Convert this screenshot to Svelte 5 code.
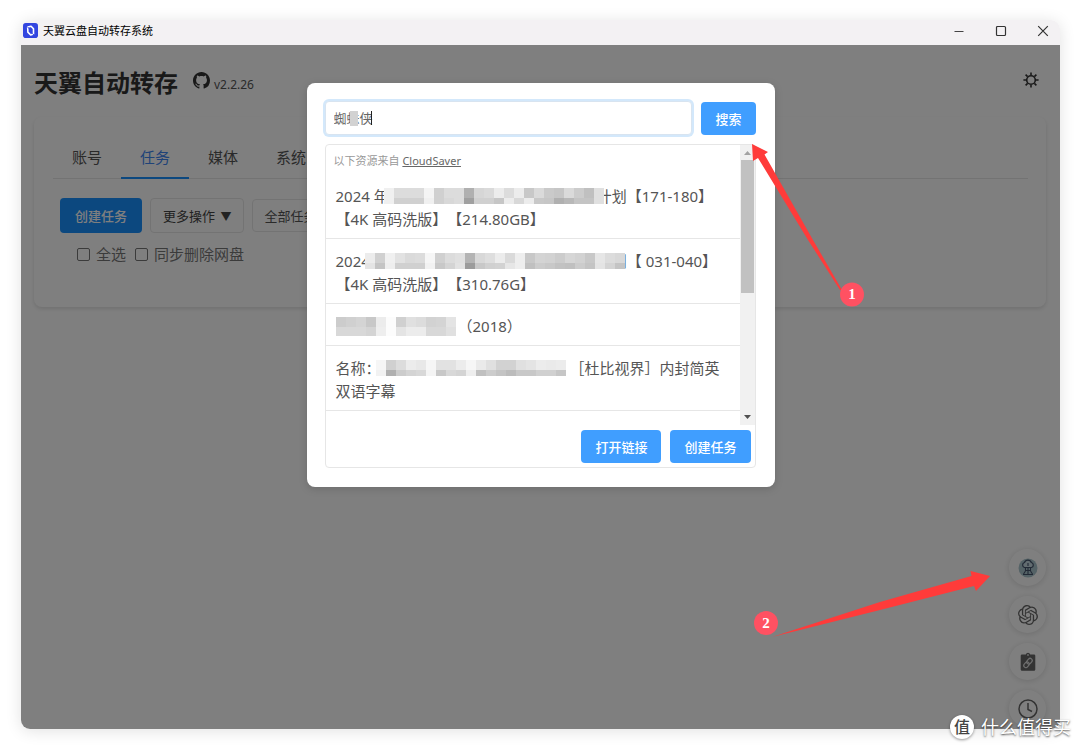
<script lang="ts">
    let keyword = '蜘蛛侠';
    let activeTab = '任务';
    let checkAll = false;
    let syncDelete = false;
    const tabs = ['账号', '任务', '媒体', '系统'];

    // hidden parts of resource titles, two rows of grey levels per title
    const masks: Record<string, string[]> = {
        a: [
            'f0 dc dc dc f4 d0 dc dc b0 d6 da ec dc ec c8 da ca c6 da cc c0 e0',
            'f0 d0 d0 d0 f0 d0 d8 dc a0 d0 d0 c6 ec d8 ec c8 c6 b0 b8 c4 c4 e0',
        ],
        b: [
            'ec d0 f0 e2 da dc f6 d0 dc e0 b4 d8 de ec da ee c8 d4 d2 cc d6 d2 c8 e6 dc d8',
            'e4 c4 ee d0 d0 d0 f2 c8 d4 e2 9c c8 d0 d2 e6 ee c0 cc c8 c2 c0 cc c4 e4 d4 c4',
        ],
        c: [
            'cc d0 d4 c8 ec fc d0 e0 dc d2 d4 e4',
            'd8 d8 d8 d4 ee fc e4 ec ec d8 d8 e0',
        ],
        d: [
            'f6 d0 dc ec e8 f6 e2 e2 ec f6 ea e0 d2 d2 e0 e4 ec ea ec',
            'f2 b0 cc d4 d8 f4 c8 d8 d4 ee c0 cc c4 bc c8 c8 d0 d0 c6',
        ],
    };
    const items = [
        { before: '2024 年', mask: 'a', after: '计划【171-180】', second: '【4K 高码洗版】【214.80GB】' },
        { before: '2024', mask: 'b', after: '划【 031-040】', second: '【4K 高码洗版】【310.76G】' },
        { before: '', mask: 'c', after: '（2018）', second: '' },
        { before: '名称：', mask: 'd', after: '［杜比视界］内封简英', second: '双语字幕' },
    ];

    function cells(key: string) {
        return masks[key].map((row) => row.split(' '));
    }
</script>

<div class="desktop">
    <div class="window">
        <header class="titlebar">
            <svg class="app-icon" width="15" height="15" viewBox="0 0 16 16" aria-hidden="true">
                <rect width="16" height="16" rx="3" fill="#3346e0"/>
                <path d="M5 4.2L8.6 3.4L11.2 6.2V11.8L8.2 12.8L5.2 9.8Z" fill="none" stroke="#fff" stroke-width="1.7" stroke-linejoin="round"/>
                <path d="M4.600 3.800L6.400 6M10 11L11.600 12.800" stroke="#3346e0" stroke-width="1"/>
            </svg>
            <span class="app-name">天翼云盘自动转存系统</span>
            <div class="controls">
                <button aria-label="最小化">
                    <svg width="12" height="12" viewBox="0 0 12 12"><path d="M1.5 6.5H10.5" stroke="#444" stroke-width="1.2"/></svg>
                </button>
                <button aria-label="最大化">
                    <svg width="12" height="12" viewBox="0 0 12 12"><rect x="1.5" y="1.5" width="9" height="9" rx="1" fill="none" stroke="#333" stroke-width="1.2"/></svg>
                </button>
                <button aria-label="关闭">
                    <svg width="12" height="12" viewBox="0 0 12 12"><path d="M1.2 1.2L10.8 10.8M10.8 1.2L1.2 10.8" stroke="#333" stroke-width="1.2"/></svg>
                </button>
            </div>
        </header>

        <div class="page">
            <div class="page-head">
                <h1>天翼自动转存</h1>
                <a class="github" href="#github" aria-label="GitHub">
                    <svg width="17" height="17" viewBox="0 0 16 16" fill="#333"><path d="M8 0C3.58 0 0 3.58 0 8c0 3.54 2.29 6.53 5.47 7.59.4.07.55-.17.55-.38 0-.19-.01-.82-.01-1.49-2.01.37-2.53-.49-2.69-.94-.09-.23-.48-.94-.82-1.13-.28-.15-.68-.52-.01-.53.63-.01 1.08.58 1.23.82.72 1.21 1.87.87 2.33.66.07-.52.28-.87.51-1.07-1.78-.2-3.64-.89-3.64-3.95 0-.87.31-1.59.82-2.15-.08-.2-.36-1.02.08-2.12 0 0 .67-.21 2.2.82.64-.18 1.32-.27 2-.27s1.36.09 2 .27c1.53-1.04 2.2-.82 2.2-.82.44 1.1.16 1.92.08 2.12.51.56.82 1.27.82 2.15 0 3.07-1.87 3.75-3.65 3.95.29.25.54.73.54 1.48 0 1.07-.01 1.93-.01 2.2 0 .21.15.46.55.38A8.01 8.01 0 0 0 16 8c0-4.42-3.58-8-8-8z"/></svg>
                </a>
                <span class="version">v2.2.26</span>
                <button class="theme" aria-label="切换主题">
                    <svg width="16" height="16" viewBox="0 0 16 16" fill="none" stroke="#333" stroke-width="1.6">
                        <circle cx="8" cy="8" r="4.3"/>
                        <path d="M8 0.4V3M8 13V15.6M0.4 8H3M13 8H15.6M2.6 2.6L4.6 4.6M11.4 11.4L13.4 13.4M2.6 13.4L4.6 11.4M11.4 4.6L13.4 2.6"/>
                    </svg>
                </button>
            </div>

            <section class="card">
                <nav class="tabs">
                    {#each tabs as tab}
                        <button class:active={tab === activeTab} on:click={() => activeTab = tab}>{tab}</button>
                    {/each}
                </nav>
                <div class="toolbar">
                    <button class="create">创建任务</button>
                    <button class="more">更多操作 <span>▼</span></button>
                    <select aria-label="任务筛选">
                        <option>全部任务</option>
                    </select>
                </div>
                <div class="checks">
                    <label><input type="checkbox" bind:checked={checkAll}>全选</label>
                    <label><input type="checkbox" bind:checked={syncDelete}>同步删除网盘</label>
                </div>
            </section>

            <div class="floats">
                <button aria-label="CloudSaver">
                    <svg width="20" height="20" viewBox="0 0 20 20">
                        <circle cx="10" cy="10" r="9.5" fill="#a9c4cc"/>
                        <path d="M6.5 9.5a2.6 2.6 0 0 1 0-5a3.6 3.6 0 0 1 6.8 0a2.6 2.6 0 0 1 .2 5Z" fill="#c4d8e0" stroke="#44546c" stroke-width="1.2"/>
                        <path d="M10 5V8M7.5 10V12.5H12.5V10M10 10V16M5.5 16L7.5 13M14.5 16L12.5 13M5 16.5H15" fill="none" stroke="#44546c" stroke-width="1.1"/>
                    </svg>
                </button>
                <button aria-label="AI">
                    <svg width="20" height="20" viewBox="0 0 24 24" fill="#666"><path d="M22.2819 9.8211a5.9847 5.9847 0 0 0-.5157-4.9108 6.0462 6.0462 0 0 0-6.5098-2.9A6.0651 6.0651 0 0 0 4.9807 4.1818a5.9847 5.9847 0 0 0-3.9977 2.9 6.0462 6.0462 0 0 0 .7427 7.0966 5.98 5.98 0 0 0 .511 4.9107 6.051 6.051 0 0 0 6.5146 2.9001A5.9847 5.9847 0 0 0 13.2599 24a6.0557 6.0557 0 0 0 5.7718-4.2058 5.9894 5.9894 0 0 0 3.9977-2.9001 6.0557 6.0557 0 0 0-.7475-7.073zm-9.022 12.6081a4.4755 4.4755 0 0 1-2.8764-1.0408l.1419-.0804 4.7783-2.7582a.7948.7948 0 0 0 .3927-.6813v-6.7369l2.02 1.1686a.071.071 0 0 1 .038.052v5.5826a4.504 4.504 0 0 1-4.4945 4.4944zm-9.6607-4.1254a4.4708 4.4708 0 0 1-.5346-3.0137l.142.0852 4.783 2.7582a.7712.7712 0 0 0 .7806 0l5.8428-3.3685v2.3324a.0804.0804 0 0 1-.0332.0615L9.74 19.9502a4.4992 4.4992 0 0 1-6.1408-1.6464zM2.3408 7.8956a4.485 4.485 0 0 1 2.3655-1.9728V11.6a.7664.7664 0 0 0 .3879.6765l5.8144 3.3543-2.0201 1.1685a.0757.0757 0 0 1-.071 0l-4.8303-2.7865A4.504 4.504 0 0 1 2.3408 7.872zm16.5963 3.8558L13.1038 8.364 15.1192 7.2a.0757.0757 0 0 1 .071 0l4.8303 2.7913a4.4944 4.4944 0 0 1-.6765 8.1042v-5.6772a.79.79 0 0 0-.407-.667zm2.0107-3.0231l-.142-.0852-4.7735-2.7818a.7759.7759 0 0 0-.7854 0L9.409 9.2297V6.8974a.0662.0662 0 0 1 .0284-.0615l4.8303-2.7866a4.4992 4.4992 0 0 1 6.6802 4.66zM8.3065 12.863l-2.02-1.1638a.0804.0804 0 0 1-.038-.0567V6.0742a4.4992 4.4992 0 0 1 7.3757-3.4537l-.142.0805L8.704 5.459a.7948.7948 0 0 0-.3927.6813zm1.0976-2.3654l2.602-1.4998 2.6069 1.4998v2.9994l-2.5974 1.4997-2.6067-1.4997Z"/></svg>
                </button>
                <button aria-label="粘贴链接">
                    <svg width="20" height="20" viewBox="0 0 20 20">
                        <path d="M4 2.500H7.800a2.300 2.300 0 0 1 4.400 0H16a1.300 1.300 0 0 1 1.300 1.300V17.500a1.300 1.300 0 0 1-1.300 1.300H4a1.300 1.300 0 0 1-1.300-1.300V3.800A1.300 1.300 0 0 1 4 2.500Z" fill="#666"/>
                        <circle cx="10" cy="3" r="0.900" fill="#ddd"/>
                        <g transform="rotate(-50 10 11)" fill="none" stroke="#ddd" stroke-width="1.200">
                            <rect x="4.600" y="8.900" width="6.200" height="4.200" rx="2.100"/>
                            <rect x="9.200" y="8.900" width="6.200" height="4.200" rx="2.100"/>
                        </g>
                    </svg>
                </button>
                <button aria-label="历史记录">
                    <svg width="20" height="20" viewBox="0 0 20 20" fill="none" stroke="#666" stroke-width="1.5"><circle cx="10" cy="10" r="9"/><path d="M10 4V10.5L14 12.5"/></svg>
                </button>
            </div>

            <div class="overlay">
                <div class="modal" role="dialog" aria-label="资源搜索">
                    <div class="search">
                        <div class="field">
                            <input type="text" aria-label="搜索关键词" bind:value={keyword}>
                            <span class="smudge"></span>
                            <span class="caret"></span>
                        </div>
                        <button class="primary">搜索</button>
                    </div>
                    <div class="results">
                        <div class="scroller">
                            <div class="list">
                                <p class="source">以下资源来自 <a href="#cloudsaver">CloudSaver</a></p>
                                <ul>
                                    {#each items as item}
                                        <li>
                                            {item.before}<svg class="mask mask-{item.mask}" width={cells(item.mask)[0].length * 10} height={item.mask === 'c' ? 19 : 16} aria-hidden="true">
                                                {#each cells(item.mask) as row, r}
                                                    {#each row as level, c}
                                                        <rect x={c * 10} y={r * 10} width="10" height="10" fill="#{level}{level}{level}"/>
                                                    {/each}
                                                {/each}
                                            </svg>{item.after}
                                            {#if item.second}<br>{item.second}{/if}
                                        </li>
                                    {/each}
                                </ul>
                            </div>
                            <div class="scrollbar" aria-hidden="true">
                                <svg width="15" height="15" viewBox="0 0 15 15"><path d="M4 10L7.500 6L11 10Z" fill="#a3a3a3"/></svg>
                                <div class="thumb"></div>
                                <svg width="15" height="15" viewBox="0 0 15 15"><path d="M4 5L7.500 9L11 5Z" fill="#505050"/></svg>
                            </div>
                        </div>
                        <div class="actions">
                            <button class="primary">打开链接</button>
                            <button class="primary">创建任务</button>
                        </div>
                    </div>
                </div>
            </div>
        </div>
    </div>

    <svg class="notes" width="1080" height="750" viewBox="0 0 1080 750" aria-hidden="true">
        <g fill="#ff3b3a">
            <path d="M752 144L768 152L764.500 154.500L813 240L842 290L840 290L808 240L758 158L753 161Z"/>
            <path d="M990 576L970.500 571L971.500 576L880 602L772 637L880 610L974 586L976 591Z"/>
        </g>
        <circle cx="852" cy="294.500" r="12" fill="#ff5162"/>
        <circle cx="766" cy="623" r="12" fill="#ff5162"/>
        <text x="852" y="299">1</text>
        <text x="766" y="628">2</text>
    </svg>

    <div class="watermark">
        <span class="seal">值</span>
        <span>什么值得买</span>
    </div>
</div>

<style>
:global(body) {
    background: #fff;
}
.desktop {
    position: relative;
    box-sizing: border-box;
    min-height: 100vh;
    padding: 20px 20px 21px 21px;
    display: flex;
    overflow: hidden;
    font-family: "Noto Sans", "Noto Sans CJK SC", sans-serif;
    color: #333;
}
button, input, select {
    font-family: inherit;
    margin: 0;
}
button {
    border: none;
    background: none;
    padding: 0;
    cursor: pointer;
}
svg {
    display: block;
}
.window {
    flex: 1;
    display: flex;
    flex-direction: column;
    border-radius: 9px;
    overflow: hidden;
    box-shadow: 0 2px 16px rgba(0, 0, 0, 0.12);
}
.titlebar {
    display: flex;
    align-items: center;
    box-sizing: border-box;
    height: 25px;
    padding: 0 1px 4px 2px;
    background: #f3f1f3;
}
.app-name {
    margin-left: 5px;
    font-size: 11px;
    line-height: 20px;
    color: #000;
}
.controls {
    display: flex;
    gap: 10px;
    margin-left: auto;
}
.controls button {
    width: 32px;
    height: 20px;
    display: flex;
    align-items: center;
    justify-content: center;
}
.page {
    position: relative;
    flex: 1;
    padding: 20px 14px 0 13px;
    background: #fff;
}
.page-head {
    display: flex;
    align-items: center;
    height: 36px;
}
h1 {
    margin: 0;
    font-size: 24px;
    line-height: 36px;
    font-weight: 700;
}
.github {
    margin: 0 4px 6px 15px;
}
.version {
    font-size: 12px;
    line-height: 18px;
    padding-top: 3px;
    color: #555;
}
.theme {
    margin: 0 7px 6px auto;
}
.card {
    margin-top: 16px;
    padding: 21px 18px 42px 19px;
    border-radius: 8px;
    box-shadow: 0 2px 4px rgba(0, 0, 0, 0.12);
}
.tabs {
    display: flex;
    border-bottom: 1px solid #e6e6e6;
}
.tabs button {
    height: 41px;
    margin-bottom: -1px;
    padding: 0 19px 2px;
    font-size: 15px;
    color: #555;
    border-bottom: 2px solid transparent;
}
.tabs button.active {
    color: #3f86f0;
    border-bottom-color: #1890ff;
}
.toolbar {
    display: flex;
    align-items: center;
    gap: 8px;
    padding: 19px 7px 0;
}
.toolbar button {
    box-sizing: border-box;
    height: 35px;
    border-radius: 4px;
    font-size: 13px;
}
.create {
    padding: 0 15px;
    background: #1890ff;
    color: #fff;
    font-weight: 500;
}
.more {
    padding: 0 12px;
    border: 1px solid #e6e6e6;
    color: #444;
}
.toolbar .more span {
    margin-left: 2px;
    font-size: 11px;
}
select {
    width: 120px;
    height: 33px;
    padding: 0 11px;
    appearance: none;
    border: 1px solid #e6e6e6;
    border-radius: 4px;
    background: #fff;
    font-size: 13px;
    color: #555;
}
.checks {
    display: flex;
    gap: 9px;
    padding: 10px 24px 0;
}
.checks label {
    display: flex;
    align-items: center;
    gap: 6px;
    font-size: 15px;
    line-height: 22px;
    color: #777;
}
.checks input {
    appearance: none;
    width: 13px;
    height: 13px;
    border: 1px solid #767676;
    border-radius: 2px;
}
.floats {
    position: absolute;
    right: 14px;
    bottom: 2px;
    display: flex;
    flex-direction: column;
    gap: 10px;
}
.floats button {
    width: 37px;
    height: 37px;
    display: flex;
    align-items: center;
    justify-content: center;
    border-radius: 50%;
    background: #fff;
    box-shadow: 0 1px 6px rgba(0, 0, 0, 0.14);
}
.overlay {
    position: absolute;
    inset: 0;
    display: flex;
    align-items: flex-start;
    justify-content: center;
    padding-top: 38px;
    background: rgba(0, 0, 0, 0.5);
}
.modal {
    box-sizing: border-box;
    width: 468px;
    max-width: 90%;
    padding: 18px 19px 19px 18px;
    border-radius: 8px;
    background: #fff;
    box-shadow: 0 2px 8px rgba(0, 0, 0, 0.15);
}
.search {
    display: flex;
    align-items: center;
    gap: 9px;
}
.field {
    position: relative;
    flex: 1;
}
.field input {
    box-sizing: border-box;
    width: 100%;
    height: 34px;
    padding: 0 8px 2px;
    border: 1px solid #d8e4f0;
    border-radius: 4px;
    box-shadow: 0 0 0 2px #d3e8fb;
    outline: none;
    font-size: 13px;
    color: #666;
    display: block;
}
.smudge {
    position: absolute;
    left: 25px;
    top: 10px;
    width: 8px;
    height: 15px;
    background: #d2d2d2;
}
.caret {
    position: absolute;
    left: 46px;
    top: 10px;
    width: 1px;
    height: 14px;
    background: #222;
}
.primary {
    height: 33px;
    padding: 0 14px;
    border-radius: 4px;
    background: #409eff;
    color: #fff;
    font-size: 13px;
    font-weight: 500;
}
.results {
    margin-top: 9px;
    border: 1px solid #e6e6e6;
    border-radius: 4px;
}
.scroller {
    display: flex;
    height: 280px;
}
.list {
    flex: 1;
    overflow: hidden;
}
.source {
    margin: 0;
    padding: 6px 8px 3px;
    font-size: 11px;
    line-height: 20px;
    color: #999;
}
.source a {
    color: #666;
}
ul {
    margin: 0;
    padding: 0;
    list-style: none;
}
li {
    padding: 11px 0 7px 10px;
    border-bottom: 1px solid #e6e6e6;
    font-size: 15px;
    line-height: 23px;
    color: #555;
    white-space: nowrap;
    text-spacing-trim: space-all;
}
.mask {
    position: relative;
    display: inline-block;
    vertical-align: middle;
    margin: -3px -7px 0 -5px;
}
.mask-b {
    margin-right: -13px;
}
.mask-c {
    margin: -2px 2px 0 0;
}
.mask-d {
    margin-right: 4px;
}
.scrollbar {
    display: flex;
    flex-direction: column;
    justify-content: space-between;
    width: 15px;
    background: #f1f1f1;
}
.thumb {
    height: 133px;
    margin: 0 1px 117px;
    background: #c1c1c1;
}
.actions {
    display: flex;
    justify-content: flex-end;
    gap: 9px;
    padding: 5px 4px 4px;
}
.notes {
    position: absolute;
    left: 0;
    top: 0;
    pointer-events: none;
}
.notes text {
    fill: #fff;
    font-family: "Liberation Serif", serif;
    font-size: 15px;
    font-weight: 700;
    text-anchor: middle;
}
.watermark {
    position: absolute;
    right: 9px;
    bottom: 9px;
    display: flex;
    align-items: center;
    gap: 7px;
    font-size: 18px;
    line-height: 28px;
    color: #fff;
    text-shadow: 0 1px 2px rgba(0, 0, 0, 0.7);
}
.seal {
    width: 24px;
    height: 24px;
    border-radius: 50%;
    background: #fff;
    color: #444;
    font-size: 16px;
    font-weight: 500;
    line-height: 24px;
    text-align: center;
    text-shadow: none;
    box-shadow: 0 1px 3px rgba(0, 0, 0, 0.4);
}
</style>
